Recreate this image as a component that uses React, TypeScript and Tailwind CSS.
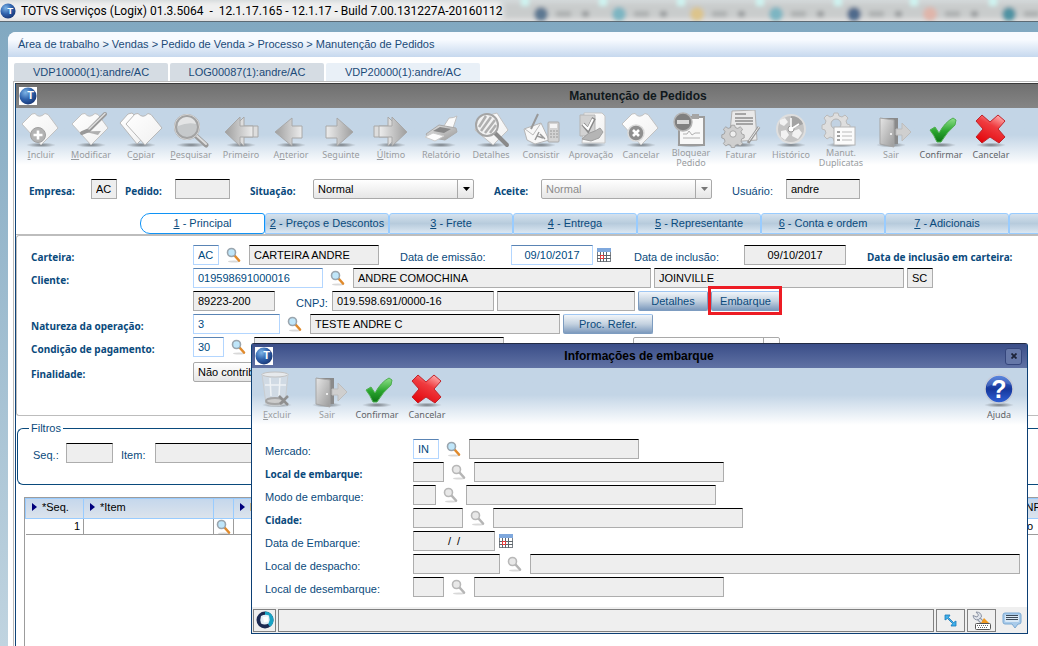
import type { ReactNode } from 'react'
import clsx from 'clsx'

type IconName =
  | 'incluir' | 'modificar' | 'copiar' | 'pesquisar' | 'primeiro' | 'anterior' | 'seguinte' | 'ultimo'
  | 'relatorio' | 'detalhes' | 'consistir' | 'aprovacao' | 'cancelarPedido' | 'bloquear' | 'faturar'
  | 'historico' | 'duplicatas' | 'sair' | 'confirmar' | 'cancelar' | 'excluir' | 'ajuda'

interface Tool {
  label: string
  key?: string
  icon: IconName
  active?: boolean
}

const TOOLS: Tool[] = [
  { label: 'Incluir',           key: 'I', icon: 'incluir' },
  { label: 'Modificar',         key: 'M', icon: 'modificar' },
  { label: 'Copiar',            key: 'o', icon: 'copiar' },
  { label: 'Pesquisar',         key: 'P', icon: 'pesquisar' },
  { label: 'Primeiro',          icon: 'primeiro' },
  { label: 'Anterior',          key: 'n', icon: 'anterior' },
  { label: 'Seguinte',          key: 'g', icon: 'seguinte' },
  { label: 'Último',            key: 'Ú', icon: 'ultimo' },
  { label: 'Relatório',         icon: 'relatorio' },
  { label: 'Detalhes',          icon: 'detalhes' },
  { label: 'Consistir',         icon: 'consistir' },
  { label: 'Aprovação',         icon: 'aprovacao' },
  { label: 'Cancelar',          icon: 'cancelarPedido' },
  { label: 'Bloquear Pedido',   icon: 'bloquear' },
  { label: 'Faturar',           icon: 'faturar' },
  { label: 'Histórico',         icon: 'historico' },
  { label: 'Manut. Duplicatas', icon: 'duplicatas' },
  { label: 'Sair',              icon: 'sair' },
  { label: 'Confirmar',         icon: 'confirmar', active: true },
  { label: 'Cancelar',          icon: 'cancelar',  active: true },
]

const MODAL_TOOLS: Tool[] = [
  { label: 'Excluir',   key: 'E', icon: 'excluir' },
  { label: 'Sair',      icon: 'sair' },
  { label: 'Confirmar', icon: 'confirmar', active: true },
  { label: 'Cancelar',  icon: 'cancelar',  active: true },
]

const FOLDERS = ['Preços e Descontos', 'Frete', 'Entrega', 'Representante', 'Conta e ordem', 'Adicionais']

const SHIRT = 'M3 14 L13 4 L16 3.5 Q20 9 26 3.5 L29 4.5 L39 18 L22 35 Z'
const GEAR = 'M-2 -11h4l1 3 3 1 3-2 3 3-2 3 1 3 3 1v4l-3 1-1 3 2 3-3 3-3-2-3 1-1 3h-4l-1-3-3-1-3 2-3-3 2-3-1-3-3-1v-4l3-1 1-3-2-3 3-3 3 2 3-1z'

/* Gradientes usados por todos os ícones */
function Defs() {
  return (
    <svg width="0" height="0" className="absolute" aria-hidden="true">
      <defs>
        <linearGradient id="papel" x1="0" y1="0" x2="1" y2="1">
          <stop offset="0" stopColor="#ffffff" />
          <stop offset="1" stopColor="#f0f0f0" />
        </linearGradient>
        <linearGradient id="cinza" x1="0" y1="0" x2="1" y2="1">
          <stop offset="0" stopColor="#e6e6e6" />
          <stop offset="1" stopColor="#9a9a9a" />
        </linearGradient>
        <linearGradient id="seta" x1="0" y1="0" x2="1" y2="0">
          <stop offset="0" stopColor="#9e9e9e" />
          <stop offset="1" stopColor="#ededed" />
        </linearGradient>
        <linearGradient id="setaDir" x1="0" y1="0" x2="1" y2="0">
          <stop offset="0" stopColor="#ededed" />
          <stop offset="1" stopColor="#9e9e9e" />
        </linearGradient>
        <linearGradient id="verde" x1="0" y1="0" x2="0" y2="1">
          <stop offset="0" stopColor="#8fe08a" />
          <stop offset="0.55" stopColor="#2aa52f" />
          <stop offset="1" stopColor="#0c7414" />
        </linearGradient>
        <linearGradient id="vermelho" x1="0.8" y1="0" x2="0.3" y2="1">
          <stop offset="0" stopColor="#ffb0b0" />
          <stop offset="0.4" stopColor="#ef3b3f" />
          <stop offset="1" stopColor="#e3070d" />
        </linearGradient>
        <radialGradient id="azul" cx="0.35" cy="0.3" r="0.8">
          <stop offset="0" stopColor="#7db4e6" />
          <stop offset="0.5" stopColor="#2f62ac" />
          <stop offset="1" stopColor="#14306e" />
        </radialGradient>
        <linearGradient id="ajudaAzul" x1="0" y1="0" x2="0" y2="1">
          <stop offset="0" stopColor="#3f74dd" />
          <stop offset="0.5" stopColor="#16379b" />
          <stop offset="1" stopColor="#2f62d8" />
        </linearGradient>
        <radialGradient id="sombra">
          <stop offset="0" stopColor="#000000" stopOpacity="0.45" />
          <stop offset="1" stopColor="#000000" stopOpacity="0" />
        </radialGradient>
      </defs>
    </svg>
  )
}

const ICONS: Record<IconName, ReactNode> = {
  incluir: (
    <>
      <path d={SHIRT} fill="url(#papel)" stroke="#c2c2c2" />
      <circle cx="19" cy="25" r="7.5" fill="#b3b3b3" stroke="#a0a0a0" />
      <path d="M19 20.5v9M14.5 25h9" stroke="#fff" strokeWidth="2.6" />
    </>
  ),
  modificar: (
    <>
      <path d={SHIRT} fill="url(#papel)" stroke="#c2c2c2" />
      <path d="M12 22q10-1 20-1l-3 4q-10-3-17-3z" fill="#b0b0b0" />
      <path d="M36 4 L20 20 L13 23" stroke="#999" strokeWidth="4" strokeLinecap="round" fill="none" />
      <path d="M36 3.500 L20 19" stroke="#dedede" strokeWidth="1.5" strokeLinecap="round" />
    </>
  ),
  copiar: (
    <>
      <path d="M1 13 L9 4 L13 3 L32 20 L18 34 Z" fill="url(#papel)" stroke="#b8b8b8" />
      <path d="M7 14 L16 4 L19 3.500 Q24 9 29 3.500 L32 4.500 L43 18 L26 35 Z" fill="url(#papel)" stroke="#b8b8b8" />
    </>
  ),
  pesquisar: (
    <>
      <path d="M26 25 L37 35" stroke="#9a9a9a" strokeWidth="5" strokeLinecap="round" />
      <path d="M27 25 L37 34" stroke="#dcdcdc" strokeWidth="2" strokeLinecap="round" />
      <circle cx="18" cy="17" r="11.500" fill="#c6c9cb" stroke="#a3a3a3" strokeWidth="3" />
      <circle cx="18" cy="17" r="12.500" fill="none" stroke="#d8d8d8" />
      <path d="M9 16a9 8 0 0 1 18-2q-8-2-18 2z" fill="#fff" opacity="0.5" />
    </>
  ),
  primeiro: (
    <>
      <path d="M10 22 L25 7v9h14v11h-14v9z" fill="#dddddd" stroke="#a8a8a8" />
      <path d="M6 22 L21 7v9h13v11h-13v9z" fill="url(#seta)" stroke="#a8a8a8" />
    </>
  ),
  anterior: <path d="M6 22 L23 8v8h10v12h-10v8z" fill="url(#seta)" stroke="#a8a8a8" />,
  seguinte: <path d="M34 22 L18 8v8h-11v12h11v8z" fill="url(#setaDir)" stroke="#a8a8a8" />,
  ultimo: (
    <>
      <path d="M34 22 L19 7v9h-14v11h14v9z" fill="#dddddd" stroke="#a8a8a8" />
      <path d="M38 22 L23 7v9h-13v11h13v9z" fill="url(#setaDir)" stroke="#a8a8a8" />
    </>
  ),
  relatorio: (
    <>
      <path d="M23 19 L30 8 Q35 8 38 6 L34 18z" fill="#fafafa" stroke="#c0c0c0" />
      <path d="M7 24 L20 15 L37 18 L38 22 L26 30 L9 27z" fill="url(#cinza)" stroke="#aaa" />
      <path d="M14 21 L21 17 L32 19 L25 23z" fill="#888" />
      <path d="M6 27 L14 23 L25 26 L16 31z" fill="#fdfdfd" stroke="#ccc" />
    </>
  ),
  detalhes: (
    <>
      <path d="M13 7 L28 3 L39 20 L24 35 L6 20z" fill="url(#papel)" stroke="#c2c2c2" />
      <path d="M26 23 L38 35" stroke="#8a8a8a" strokeWidth="4" strokeLinecap="round" />
      <circle cx="18" cy="15" r="11" fill="#f2f2f2" stroke="#a5a5a5" strokeWidth="2" />
      <path d="M10 17 L17 6M12 21 L22 7M16 23 L26 10M21 23 L27 15" stroke="#b0b0b0" strokeWidth="2.500" />
    </>
  ),
  consistir: (
    <>
      <path d="M5 19 L22 13 L30 30 L16 34 L8 30z" fill="#f8f8f8" stroke="#b5b5b5" />
      <path d="M12 19 L19 4" stroke="#999" strokeWidth="2" />
      <path d="M6 19 L14 25 L22 13" stroke="#bbb" fill="none" />
      <path d="M16 30 L20 22 M18 26 L24 28 M21 24 L26 29" stroke="#999" strokeWidth="1.500" />
      <rect x="29" y="12" width="11" height="20" rx="1" fill="#d3d3d3" stroke="#aaa" />
      <rect x="31" y="14" width="7" height="4" fill="#f5f5f5" />
      <path d="M31 21h8M31 24h8M31 27h8" stroke="#999" strokeDasharray="2 1" />
    </>
  ),
  aprovacao: (
    <>
      <path d="M15 3h18l3 3v27H13z" fill="url(#papel)" stroke="#c4c4c4" />
      <path d="M11 5h15v21H11z" fill="#d2d2d2" stroke="#b5b5b5" />
      <path d="M14 14 L19 20 L25 8" stroke="#8a8a8a" strokeWidth="4" fill="none" />
      <path d="M14 14 L19 19 L24 9" stroke="#fff" strokeWidth="2" fill="none" />
      <path d="M13 29q6-7 13-8l5-3 3 4-4 6-8 3z" fill="#b5b5b5" stroke="#9f9f9f" />
    </>
  ),
  cancelarPedido: (
    <>
      <path d={SHIRT} fill="url(#papel)" stroke="#c2c2c2" />
      <circle cx="17" cy="23" r="8" fill="#8f8f8f" stroke="#dadada" strokeWidth="1.500" />
      <path d="M14 20 L20 26M20 20 L14 26" stroke="#fff" strokeWidth="2.600" />
    </>
  ),
  bloquear: (
    <>
      <rect x="10" y="7" width="25" height="28" fill="#f8f8f8" stroke="#9c9c9c" strokeWidth="2" />
      <path d="M23 4h7v5h-7z" fill="#a5a5a5" />
      <path d="M14 24h4l2-3 3 4 3-2h5M14 28h17" stroke="#b0b0b0" fill="none" />
      <circle cx="14" cy="12" r="9" fill="#808080" stroke="#b5b5b5" strokeWidth="1.500" />
      <rect x="8" y="10" width="12" height="4" fill="#d9d9d9" />
    </>
  ),
  faturar: (
    <>
      <path d="M13 1 L36 0 L38 30 L10 32z" fill="#e9e9e9" stroke="#b0b0b0" />
      <path d="M16 4h11M16 8h18M16 11h18M17 14h17" stroke="#a5a5a5" strokeWidth="2" />
      <g transform="translate(14 24) scale(0.8)">
        <path d={GEAR} fill="#cfcfcf" stroke="#999" />
        <circle r="4" fill="#eee" stroke="#999" />
      </g>
      <path d="M40 17 L29 33" stroke="#999" strokeWidth="3" />
      <path d="M40 17 L30 31" stroke="#e9e9e9" />
    </>
  ),
  historico: (
    <>
      <circle cx="22" cy="19" r="14" fill="#c4c4c4" stroke="#dedede" strokeWidth="2" />
      <path d="M22 19 L22 6 A13 13 0 0 1 34 14z" fill="#a3a3a3" />
      <path d="M11 10l5-2 3 4-4 4-4-2zM12 21l5-1 3 5-4 5-4-3zM24 21l6-2 3 4-4 6-6-3z" fill="#f2f2f2" />
      <circle cx="22" cy="19" r="3" fill="#fff" stroke="#999" />
      <path d="M22 19V8M22 19l8-5" stroke="#fff" strokeWidth="1.500" />
    </>
  ),
  duplicatas: (
    <>
      <g transform="translate(17 14)">
        <path d={GEAR} fill="#dedede" stroke="#bababa" />
        <circle r="5" fill="#c2d2e2" stroke="#b5b5b5" />
      </g>
      <rect x="15" y="17" width="21" height="18" fill="#fbfbfb" stroke="#b5b5b5" />
      <path d="M18 22h3M18 26h3M18 30h3" stroke="#a0a0a0" strokeWidth="2" />
      <path d="M23 22h10M23 26h10M23 30h10" stroke="#bbb" />
    </>
  ),
  sair: (
    <>
      <path d="M11 8h18v26H11z" fill="#8a8a8a" />
      <path d="M27 19h6v-6l9 9-9 9v-6h-6z" fill="#cfcfcf" stroke="#bdbdbd" />
      <path d="M11 8 L25 10v27 L11 34z" fill="url(#cinza)" stroke="#a5a5a5" />
      <circle cx="22" cy="24" r="1" fill="#fff" />
    </>
  ),
  confirmar: <path d="M11 20 L16 17 L20 23 Q26 12 34 8 L37 10 L36 15 Q28 22 22 32 L18 32 Q15 25 11 20z" fill="url(#verde)" stroke="#4fae50" />,
  cancelar: (
    <path
      d="M13 5 L21 12 L29 5 L36 11 L29 19 L36 27 L30 33 L21 27 L13 33 L7 27 L14 19 L7 11z"
      fill="url(#vermelho)" stroke="#c0232a" strokeLinejoin="round"
    />
  ),
  excluir: (
    <>
      <path d="M7 4 L33 4 L30 34 Q20 38 11 34z" fill="#d5dce2" fillOpacity="0.700" stroke="#c9cdd0" />
      <ellipse cx="20" cy="4.500" rx="13" ry="2.500" fill="#e6e9ec" stroke="#c2c2c2" />
      <path d="M15 8l1 18M25 8l-1 18M10 15h21" stroke="#eef2f5" strokeWidth="1.500" />
      <ellipse cx="20" cy="31" rx="9" ry="3" fill="#ccc" stroke="#a5a5a5" strokeWidth="2" />
      <path d="M24 26l9 9M33 26l-8 8" stroke="#8f8f8f" strokeWidth="2.500" />
    </>
  ),
  ajuda: (
    <>
      <circle cx="22" cy="19" r="14" fill="url(#ajudaAzul)" stroke="#c5ccd8" strokeWidth="1.500" />
      <path d="M10 17a12 11 0 0 1 24-2q-12-5-24 2z" fill="#fff" opacity="0.150" />
      <text x="22" y="28" textAnchor="middle" fontFamily="Liberation Sans" fontWeight="bold" fontSize="25" fill="#fff">?</text>
    </>
  ),
}

function ToolButton({ tool }: { tool: Tool }) {
  const at = tool.key ? tool.label.indexOf(tool.key) : -1
  const wrapped = tool.label.includes(' ')
  return (
    <button
      type="button"
      className={clsx('flex flex-col items-center w-[50px] shrink-0 pt-[2px]', tool.active ? 'text-[#5f6468]' : 'text-[#999c9f]')}
    >
      <svg width="44" height="38" viewBox="0 0 44 38" aria-hidden="true">
        <ellipse cx="22" cy="35" rx="15" ry="2.500" fill="url(#sombra)" />
        {ICONS[tool.icon]}
      </svg>
      <span className={clsx("font-['Noto_Sans'] text-[9px] text-center", wrapped ? 'leading-[10px]' : 'leading-[14px]')}>
        {at < 0 ? tool.label : (
          <>{tool.label.slice(0, at)}<u>{tool.key}</u>{tool.label.slice(at + 1)}</>
        )}
      </span>
    </button>
  )
}

function Logo({ size = 18, square = true }: { size?: number; square?: boolean }) {
  return (
    <svg width={size} height={size} viewBox="0 0 18 18" className="shrink-0" aria-hidden="true">
      {square && <rect width="18" height="18" fill="#fff" />}
      <circle cx="9" cy="9" r="8.500" fill="url(#azul)" />
      <text x="11.500" y="12" textAnchor="middle" fontFamily="Liberation Sans" fontWeight="bold" fontSize="11" fill="#fff">T</text>
    </svg>
  )
}

function LupaIcon({ off }: { off?: boolean }) {
  return (
    <svg width="15" height="16" viewBox="0 0 15 16" aria-hidden="true">
      <ellipse cx="8" cy="14.500" rx="6" ry="1" fill="#000" opacity="0.150" />
      <path d="M8.500 8.500 L13 13.500" stroke={off ? '#b5b5b5' : '#e08a2c'} strokeWidth="2.600" strokeLinecap="round" />
      <circle cx="5.500" cy="5.500" r="4" fill={off ? '#e8e8e8' : '#bfe6fa'} stroke={off ? '#b8b8b8' : '#9aa5ae'} strokeWidth="1.600" />
    </svg>
  )
}

function Lupa({ off, label }: { off?: boolean; label: string }) {
  return (
    <button type="button" aria-label={label} className="w-[30px] h-5 pr-[2px] shrink-0 flex justify-center items-center">
      <LupaIcon off={off} />
    </button>
  )
}

function Calendario() {
  return (
    <button type="button" aria-label="Abrir calendário" className="shrink-0 ml-1 h-5 flex items-center">
      <svg width="14" height="14" viewBox="0 0 14 14" aria-hidden="true">
        <rect x="0.500" y="0.500" width="13" height="13" fill="#fff" stroke="#7c8288" />
        <rect x="0" y="0" width="14" height="4" fill="#7fa8dd" />
        <path d="M0 7.500h14M0 10.500h14M3.500 4v10M6.500 4v10M9.500 4v10" stroke="#5f666c" />
        <rect x="3.500" y="7.500" width="3" height="3" fill="#fff" stroke="#e23b3b" />
      </svg>
    </button>
  )
}

interface FieldProps {
  id: string
  w: string
  value?: string
  edit?: boolean
  center?: boolean
  label?: string
}

function Field({ id, w, value = '', edit, center, label }: FieldProps) {
  return (
    <input
      id={id}
      aria-label={label}
      defaultValue={value}
      readOnly={!edit}
      className={clsx(
        'h-5 border text-[11px] leading-[18px] outline-none rounded-none',
        w,
        center ? 'text-center' : 'px-[4px]',
        edit
          ? 'bg-white text-[#004a80] border-[#b3d6ff] border-t-[#5a84b4]'
          : 'bg-[#eeeeee] text-black border-[#adadad] border-t-black',
      )}
    />
  )
}

function Combo({ id, w, value, off, label }: { id: string; w: string; value: string; off?: boolean; label?: string }) {
  return (
    <span className={clsx('relative flex h-5 shrink-0', w)}>
      <select
        id={id}
        aria-label={label}
        defaultValue={value}
        className={clsx(
          'appearance-none w-full h-5 pl-[4px] text-[11px] rounded-[2px] border border-[#a9a9a9] bg-linear-to-b from-white to-[#e6e6e6]',
          off ? 'text-[#8b8b8b]' : 'text-black',
        )}
      >
        <option>{value}</option>
      </select>
      <span className="absolute right-0 inset-y-0 w-[17px] border-l border-[#a9a9a9] flex items-center justify-center pointer-events-none">
        <svg width="7" height="4" viewBox="0 0 7 4" aria-hidden="true">
          <path d="M0 0h7L3.500 4z" fill={off ? '#777' : '#000'} />
        </svg>
      </span>
    </span>
  )
}

function Label({ htmlFor, w, bold, children }: { htmlFor: string; w?: string; bold?: boolean; children: ReactNode }) {
  return (
    <label
      htmlFor={htmlFor}
      className={clsx(
        'shrink-0 whitespace-nowrap leading-6 text-[#0a4a7c]',
        bold ? "font-['Noto_Sans'] font-bold text-[10px]" : 'text-[11px]',
        w,
      )}
    >
      {children}
    </label>
  )
}

function PushButton({ w, children }: { w: string; children: ReactNode }) {
  return (
    <button
      type="button"
      className={clsx(
        'h-5 shrink-0 text-[11px] text-[#0a4a7c] rounded-[2px] border border-[#7d9cc0] border-t-[#9fc6f2] bg-linear-to-b from-[#f1f5f9] via-[#c4d2e0] to-[#7d9abd]',
        w,
      )}
    >
      {children}
    </button>
  )
}

const TOOLBAR_BG = 'bg-linear-to-b from-[#c3d5e6] from-45% to-white to-95%'

/* Abas desfocadas atrás da barra de título transparente */
const GLASS = [
  { x: 541, color: '#5d7892' },
  { x: 619, color: '#7db5c2' },
  { x: 697, color: '#dcc48c' },
  { x: 776, color: '#7db5c2' },
  { x: 854, color: '#4f6a8c' },
  { x: 930, color: '#dfb5aa' },
  { x: 1009, color: '#4f93a3' },
]

function TitleBar() {
  return (
    <header className="relative h-[22px] shrink-0 overflow-hidden border-b border-[#5c6a74] bg-linear-to-b from-[#d3d9da] to-[#e0dfdf] flex items-center">
      <svg width="1038" height="21" className="absolute left-0 top-0" aria-hidden="true">
        <defs>
          <filter id="vidro"><feGaussianBlur stdDeviation="2" /></filter>
        </defs>
        <g filter="url(#vidro)">
          <rect x="-10" y="2" width="510" height="17" fill="#efefef" />
          <rect x="505" y="3" width="540" height="15" fill="#c9cccc" />
          {GLASS.map(g => (
            <g key={g.x}>
              <rect x={g.x - 20} y="-6" width="8" height="12" fill="#cff3f0" />
              <circle cx={g.x} cy="14" r="7" fill={g.color} />
              <rect x={g.x + 15} y="11" width="15" height="6" fill="#adb0b1" />
              <rect x={g.x + 41} y="11" width="7" height="6" fill="#9a9d9f" />
            </g>
          ))}
        </g>
      </svg>
      <div className="relative flex items-center gap-[5px]">
        <Logo size={16} square={false} />
        <h1 className="font-['Roboto'] text-[12px] leading-5 text-black whitespace-pre">
          TOTVS Serviços (Logix) 01.3.5064  -  12.1.17.165 - 12.1.17 - Build 7.00.131227A-20160112
        </h1>
      </div>
    </header>
  )
}

function EmbarqueModal() {
  return (
    <section
      role="dialog"
      aria-labelledby="titulo-embarque"
      className="absolute left-[251px] right-[10px] top-[343px] bg-white border border-[#0c3f74] border-t-[#222b44] rounded-t-[3px] flex flex-col"
    >
      <div className="h-6 px-[3px] flex items-center bg-linear-to-b from-[#3b4e88] to-[#6072a4]">
        <Logo />
        <h2 id="titulo-embarque" className="flex-1 text-center text-[12px] font-bold text-black">Informações de embarque</h2>
        <button type="button" aria-label="Fechar" className="size-[17px] mr-[2px] rounded-[3px] border border-[#35467c] bg-[#6678a8] flex items-center justify-center">
          <svg width="6" height="6" viewBox="0 0 6 6" aria-hidden="true"><path d="M0.500 0.500l5 5M5.500 0.500l-5 5" stroke="#1d2338" strokeWidth="1.800" /></svg>
        </button>
      </div>

      <div className={clsx('h-[60px] flex justify-between', TOOLBAR_BG)}>
        <div className="flex">
          {MODAL_TOOLS.map(t => <ToolButton key={t.label} tool={t} />)}
        </div>
        <div className="pr-[3px] flex"><ToolButton tool={{ label: 'Ajuda', icon: 'ajuda', active: true }} /></div>
      </div>

      <form className="pl-[13px] pr-[7px] pt-[11px] pb-[10px] flex flex-col gap-[3px]">
        <div className="h-5 flex">
          <Label htmlFor="mercado" w="w-[148px]">Mercado:</Label>
          <Field id="mercado" w="w-[26px]" value="IN" edit />
          <Lupa label="Pesquisar mercado" />
          <Field id="mercado-desc" label="Descrição do mercado" w="w-[170px]" />
        </div>
        <div className="h-5 flex">
          <Label htmlFor="local-emb" w="w-[148px]" bold>Local de embarque:</Label>
          <Field id="local-emb" w="w-[31px]" />
          <Lupa off label="Pesquisar local de embarque" />
          <Field id="local-emb-desc" label="Descrição do local de embarque" w="w-[250px]" />
        </div>
        <div className="h-5 flex">
          <Label htmlFor="modo" w="w-[148px]">Modo de embarque:</Label>
          <Field id="modo" w="w-[23px]" />
          <Lupa off label="Pesquisar modo de embarque" />
          <Field id="modo-desc" label="Descrição do modo de embarque" w="w-[250px]" />
        </div>
        <div className="h-5 flex">
          <Label htmlFor="cidade" w="w-[148px]" bold>Cidade:</Label>
          <Field id="cidade" w="w-[50px]" />
          <Lupa off label="Pesquisar cidade" />
          <Field id="cidade-desc" label="Nome da cidade" w="w-[250px]" />
        </div>
        <div className="h-5 flex">
          <Label htmlFor="data-emb" w="w-[148px]">Data de Embarque:</Label>
          <Field id="data-emb" w="w-[82px]" value="/  /" center />
          <Calendario />
        </div>
        <div className="h-5 flex">
          <Label htmlFor="despacho" w="w-[148px]">Local de despacho:</Label>
          <Field id="despacho" w="w-[87px]" />
          <Lupa off label="Pesquisar local de despacho" />
          <Field id="despacho-desc" label="Descrição do local de despacho" w="flex-1 min-w-0" />
        </div>
        <div className="h-5 flex">
          <Label htmlFor="desembarque" w="w-[148px]">Local de desembarque:</Label>
          <Field id="desembarque" w="w-[31px]" />
          <Lupa off label="Pesquisar local de desembarque" />
          <Field id="desembarque-desc" label="Descrição do local de desembarque" w="w-[250px]" />
        </div>
      </form>

      <footer className="h-[26px] px-px flex items-center gap-[2px] bg-[#efefef]">
        <button type="button" aria-label="Menu" className="w-[23px] h-[23px] border border-[#808080] flex items-center justify-center">
          <svg width="18" height="18" viewBox="0 0 18 18" className="shrink-0" aria-hidden="true">
            <circle cx="9" cy="9" r="8.500" fill="#1c2a52" />
            <path d="M9 0.500a8.500 8.500 0 0 1 5 15.300L9 9z" fill="#1aa3c4" />
            <path d="M5 5q4-2 8-0.500q1.500 4-0.500 8q-4 2-7.500 0q-1.500-3.500 0-7.500z" fill="#e4eef6" />
            <path d="M7 6l5-0.500v5l-4 1z" fill="#fff" />
          </svg>
        </button>
        <input aria-label="Mensagem" readOnly className="flex-1 min-w-0 h-[23px] border border-[#808080] bg-[#efefef]" />
        <button type="button" aria-label="Redimensionar" className="w-[29px] h-[23px] border border-[#808080] flex items-center justify-center">
          <svg width="13" height="13" viewBox="0 0 13 13" aria-hidden="true">
            <path d="M1 1h5L4.500 3.500l5 5L12 7v5H7l1.500-2.500-5-5L1 6z" fill="#3fb0ea" stroke="#1c78b8" strokeWidth="0.800" />
          </svg>
        </button>
        <button type="button" aria-label="Ferramentas" className="w-[29px] h-[23px] border border-[#808080] flex items-center justify-center">
          <svg width="19" height="19" viewBox="0 0 19 19" aria-hidden="true">
            <path d="M6 7 L12 13" stroke="#8c94a4" strokeWidth="4" />
            <path d="M6 7 L12 13" stroke="#dfe3ea" strokeWidth="2" />
            <path d="M4 1 L6.500 4 L5 6 L1 4.500 Q2 10 6.500 8.500 L9.500 6 Q9.500 1 4 1z" fill="#dfe3ea" stroke="#8c94a4" />
            <path d="M12 7 L17 12 L9 12z" fill="#f29a1f" />
            <rect x="3.500" y="12.500" width="15" height="6" rx="1" fill="#fff" stroke="#555" />
            <path d="M5 14.500h12M6 16.500h10" stroke="#666" strokeDasharray="1 1" />
          </svg>
        </button>
        <button type="button" aria-label="Comentários" className="w-7 h-[23px] flex items-center justify-center">
          <svg width="20" height="17" viewBox="0 0 20 17" aria-hidden="true">
            <path d="M3 1h14q2 0 2 2v7q0 2-2 2h-1l-3 4-3-4H3q-2 0-2-2V3q0-2 2-2z" fill="#a9cbea" stroke="#7ba9d3" />
            <rect x="3" y="3" width="14" height="7" rx="1" fill="#d8e8f6" />
            <path d="M4 3.500h12M4 5.500h12M4 7.500h12" stroke="#3c4a58" />
          </svg>
        </button>
      </footer>
    </section>
  )
}

export default function App() {
  return (
    <div className="relative h-screen overflow-hidden flex flex-col bg-linear-to-b from-[#7fa7c0] to-[#c0d4e0] font-['Liberation_Sans',sans-serif] text-[11px]">
      <Defs />
      <TitleBar />

      <main className="mt-[10px] ml-2 flex-1 min-h-0 bg-white rounded-tl-[8px] overflow-hidden flex flex-col">
        <nav className="h-[25px] shrink-0 px-[10px] flex items-center bg-linear-to-b from-[#f8fbff] from-30% to-[#c6d8ee] text-[#1b4a78] whitespace-pre">
          Área de trabalho &gt; Vendas &gt; Pedido de Venda &gt; Processo &gt; Manutenção de Pedidos
        </nav>

        <div className="shrink-0 pt-[6px] pl-[6px] flex gap-[2px] text-[#1b4a78]" role="tablist">
          <button type="button" role="tab" className="w-[154px] h-[18px] rounded-t-[2px] bg-[#d5dce3]">VDP10000(1):andre/AC</button>
          <button type="button" role="tab" className="w-[154px] h-[18px] rounded-t-[2px] bg-[#d5dce3]">LOG00087(1):andre/AC</button>
          <button type="button" role="tab" aria-selected="true" className="w-[154px] h-[18px] rounded-t-[2px] bg-[#e9f0f7]">VDP20000(1):andre/AC</button>
        </div>

        {/* Janela do programa */}
        <section className="ml-[5px] flex-1 min-h-0 border-l border-t border-[#bcbcbc] pl-px pt-px flex">
          <div className="flex-1 min-w-0 border-l border-t border-[#0f4478] border-t-[#3a3a3a] flex flex-col overflow-hidden">
            <div className="h-6 shrink-0 px-[3px] flex items-center bg-linear-to-b from-[#707070] to-[#858585]">
              <Logo />
              <h2 className="flex-1 pl-[204px] text-center text-[12px] font-bold text-[#10181c]">Manutenção de Pedidos</h2>
            </div>

            <div className={clsx('h-[60px] shrink-0 flex', TOOLBAR_BG)}>
              {TOOLS.map((t, i) => <ToolButton key={i} tool={t} />)}
            </div>

            <div className="h-5 mt-[11px] pl-[13px] shrink-0 flex">
              <Label htmlFor="empresa" w="w-[62px]" bold>Empresa:</Label>
              <Field id="empresa" w="w-[26px]" value="AC" />
              <Label htmlFor="pedido" w="ml-2 w-[50px]" bold>Pedido:</Label>
              <Field id="pedido" w="w-[55px]" />
              <Label htmlFor="situacao" w="ml-5 w-[63px]" bold>Situação:</Label>
              <Combo id="situacao" w="w-[161px]" value="Normal" />
              <Label htmlFor="aceite" w="ml-5 w-[47px]" bold>Aceite:</Label>
              <Combo id="aceite" w="w-[171px]" value="Normal" off />
              <Label htmlFor="usuario" w="ml-5 w-[54px]">Usuário:</Label>
              <Field id="usuario" w="w-[74px]" value="andre" />
            </div>

            <div className="mt-[14px] shrink-0 flex border-b border-[#bdbdbd] pl-[124px]" role="tablist">
              <button type="button" role="tab" aria-selected="true" className="w-[125px] h-[21px] shrink-0 rounded-l-[10px] rounded-r-[3px] border border-[#1093f5] bg-white text-[#0a4a7c]">
                <u>1</u> - Principal
              </button>
              {FOLDERS.map((f, i) => (
                <button key={f} type="button" role="tab" className="w-[124px] h-[21px] shrink-0 whitespace-nowrap rounded-t-[3px] border border-[#99ccff] bg-linear-to-b from-[#d5e2ee] via-[#b7cbdc] to-[#dbe7f2] text-[#0a4a7c]">
                  <u>{i + 2}</u> - {f}
                </button>
              ))}
              <span className="flex-1 min-w-0 rounded-tl-[3px] border border-r-0 border-[#99ccff] bg-linear-to-b from-[#d5e2ee] via-[#b7cbdc] to-[#dbe7f2]" />
            </div>

            <form className="shrink-0 h-[181px] rounded-l-[3px] border border-r-0 border-[#bdbdbd] pl-[14px] pt-[9px] flex flex-col gap-[3px] overflow-hidden">
              <div className="h-5 flex">
                <Label htmlFor="carteira" w="w-[162px]" bold>Carteira:</Label>
                <Field id="carteira" w="w-[26px]" value="AC" edit />
                <Lupa label="Pesquisar carteira" />
                <Field id="carteira-desc" label="Descrição da carteira" w="w-[130px]" value="CARTEIRA ANDRE" />
                <Label htmlFor="emissao" w="ml-[21px] w-[111px]">Data de emissão:</Label>
                <Field id="emissao" w="w-[82px]" value="09/10/2017" edit center />
                <Calendario />
                <Label htmlFor="inclusao" w="ml-[23px] w-[110px]">Data de inclusão:</Label>
                <Field id="inclusao" w="w-[102px]" value="09/10/2017" center />
                <Label htmlFor="inclusao-cart" w="ml-[21px] w-[171px]" bold>Data de inclusão em carteira:</Label>
                <Field id="inclusao-cart" w="w-[82px]" />
              </div>
              <div className="h-5 flex">
                <Label htmlFor="cliente" w="w-[162px]" bold>Cliente:</Label>
                <Field id="cliente" w="w-[130px]" value="019598691000016" edit />
                <Lupa label="Pesquisar cliente" />
                <div className="flex gap-[3px]">
                  <Field id="cliente-nome" label="Nome do cliente" w="w-[298px]" value="ANDRE COMOCHINA" />
                  <Field id="cliente-cidade" label="Cidade do cliente" w="w-[250px]" value="JOINVILLE" />
                  <Field id="cliente-uf" label="UF" w="w-[26px]" value="SC" />
                </div>
              </div>
              <div className="h-5 pl-[162px] flex">
                <Field id="cep" label="CEP" w="w-[82px]" value="89223-200" />
                <Label htmlFor="cnpj" w="ml-[21px] w-[36px]">CNPJ:</Label>
                <div className="flex gap-[3px]">
                  <Field id="cnpj" w="w-[162px]" value="019.598.691/0000-16" />
                  <Field id="inscricao" label="Inscrição" w="w-[138px]" />
                  <PushButton w="w-[70px]">Detalhes</PushButton>
                  <div className="relative flex">
                    <PushButton w="w-[69px]">Embarque</PushButton>
                    <span className="absolute -left-[3px] -right-[2px] -top-[5px] -bottom-[4px] border-3 border-[#ed1c24] pointer-events-none" />
                  </div>
                </div>
              </div>
              <div className="h-5 flex">
                <Label htmlFor="natureza" w="w-[162px]" bold>Natureza da operação:</Label>
                <Field id="natureza" w="w-[87px]" value="3" edit />
                <Lupa label="Pesquisar natureza" />
                <div className="flex gap-[3px]">
                  <Field id="natureza-desc" label="Descrição da natureza" w="w-[250px]" value="TESTE ANDRE C" />
                  <PushButton w="w-[90px]">Proc. Refer.</PushButton>
                </div>
              </div>
              <div className="h-5 flex">
                <Label htmlFor="condicao" w="w-[162px]" bold>Condição de pagamento:</Label>
                <Field id="condicao" w="w-[31px]" value="30" edit />
                <Lupa label="Pesquisar condição" />
                <Field id="condicao-desc" label="Descrição da condição" w="w-[250px] mr-[129px]" />
                <Combo id="frete" label="Tipo de frete" w="w-[147px]" value="" />
              </div>
              <div className="h-5 mt-[2px] flex">
                <Label htmlFor="finalidade" w="w-[162px]" bold>Finalidade:</Label>
                <Combo id="finalidade" w="w-[180px]" value="Não contribuinte" />
              </div>
            </form>

            <fieldset className="mt-[5px] ml-px shrink-0 h-[64px] rounded-l-[6px] border border-r-0 border-[#0a4a7c] pl-[15px] pt-[8px] text-[#0a4a7c]">
              <legend className="-ml-1 px-[2px] leading-[14px]">Filtros</legend>
              <div className="h-5 flex">
                <Label htmlFor="f-seq" w="w-[33px]">Seq.:</Label>
                <Field id="f-seq" w="w-[47px]" />
                <Label htmlFor="f-item" w="ml-2 w-[34px]">Item:</Label>
                <Field id="f-item" w="w-[170px]" />
              </div>
            </fieldset>

            <div className="mt-3 ml-2 flex-1 min-h-0 border-l border-t border-[#9c9c9c]">
              <table className="w-full table-fixed border-collapse text-black">
                <colgroup>
                  <col className="w-[58px]" />
                  <col className="w-[130px]" />
                  <col className="w-5" />
                  <col />
                  <col className="w-[14px]" />
                </colgroup>
                <thead>
                  <tr className="h-5 bg-linear-to-b from-[#c5d7ec] to-[#dde4ec] text-left align-top">
                    {['*Seq.', '*Item', '', 'D'].map((h, i) => (
                      <th key={i} scope="col" className="p-0 font-normal border border-[#99ccff] whitespace-nowrap leading-4">
                        {h && (
                          <span className="flex items-center gap-[5px] pl-[6px]">
                            <svg width="5" height="8" viewBox="0 0 5 8" aria-hidden="true"><path d="M0 0l5 4-5 4z" fill="#00007c" /></svg>
                            {h}
                          </span>
                        )}
                      </th>
                    ))}
                    <th scope="col" className="p-0 pl-px font-normal border-y border-[#99ccff] whitespace-nowrap leading-4">NF</th>
                  </tr>
                </thead>
                <tbody>
                  <tr className="h-4">
                    <td className="p-0 pr-[3px] text-right border-r border-b border-[#9c9c9c] leading-[15px]">1</td>
                    <td className="p-0 border-r border-b border-[#9c9c9c]" />
                    <td className="p-0 border-r border-b border-[#9c9c9c]">
                      <button type="button" aria-label="Pesquisar item" className="flex w-full h-[15px] justify-center items-center">
                        <LupaIcon />
                      </button>
                    </td>
                    <td className="p-0 border-b border-[#9c9c9c]" />
                    <td className="p-0 pl-[3px] border-b border-[#9c9c9c] leading-[15px]">o</td>
                  </tr>
                </tbody>
              </table>
            </div>
          </div>
        </section>
      </main>

      <EmbarqueModal />
    </div>
  )
}
